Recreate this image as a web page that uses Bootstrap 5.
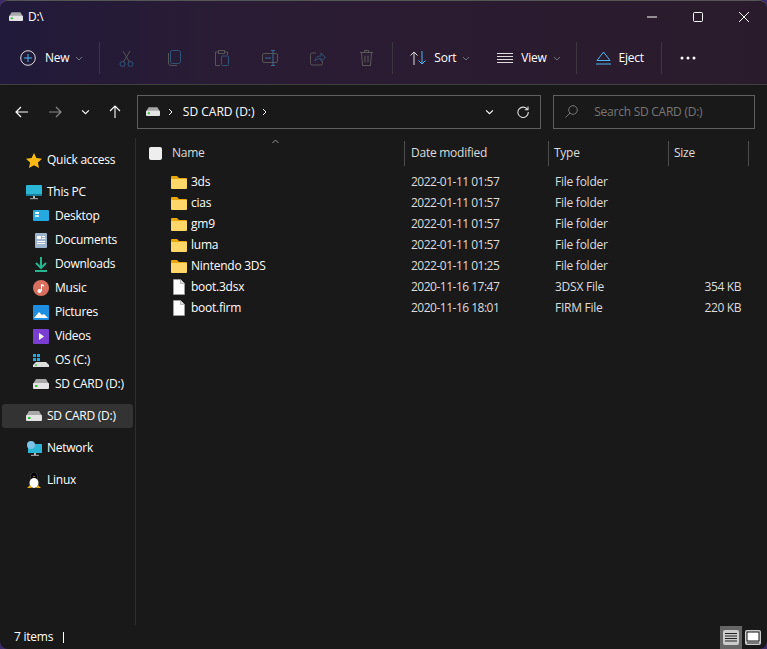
<!DOCTYPE html>
<html lang="en">
<head>
<meta charset="UTF-8">
<title>D:\</title>
<link href="https://cdn.jsdelivr.net/npm/bootstrap@5.3.0/dist/css/bootstrap.min.css" rel="stylesheet">
<style>
html, body { height: 100%; margin: 0; background: #3a2a6a; overflow: hidden; }
body { font-family: "Open Sans", "Noto Sans", sans-serif; font-size: 12px; color: #fff; letter-spacing: -.25px; }
.win { width: 767px; height: 649px; background: #191919; border-radius: 8px; overflow: hidden; border-top: 1px solid #555; }
.head-grad { background: linear-gradient(90deg, #211a3a 0%, #2a1c34 30%, #2a1b2c 100%); border-bottom: 1px solid #3f3f3f; height: 84px; }
.title-row { height: 31px; padding-left: 9px; }
.title-txt { margin-left: 5px; font-size: 12px; }
.win-ctl { width: 46px; height: 30px; }
.tool-row { height: 52px; padding-left: 20px; }
.tool-row svg { flex: none; }
.tool-lbl { font-size: 12px; font-weight: 500; }
.caret-sm { margin-left: 6px; }
.tool-sep { width: 1px; height: 32px; background: #3d3540; flex: none; }
.sep-new { margin-left: 16px; }
.sep-del { margin-left: 2px; }
.sep-view { margin-left: 15px; }
.sep-eject { margin-left: 17px; }
.ico-off { width: 48px; }
.ico-first { margin-left: 2px; }
.lbl-new { margin-left: 9px; }
.ico-sort { margin-left: 17px; }
.lbl-sort { margin-left: 7px; }
.ico-view { margin-left: 27px; }
.ico-eject { margin-left: 19px; }
.ico-more { margin-left: 18px; }
.addr-row { height: 53px; padding-right: 12px; }
.nav-ico { width: 35px; }
.nav-back { padding-left: 8px; }
.nav-fwd { padding-left: 7px; }
.nav-box { width: 30px; }
.nav-drop { padding-left: 2px; }
.addr-box { width: 405px; height: 34px; border: 1px solid #5f5f5f; margin-left: 7px; padding-left: 8px; }
.addr-txt { margin: 0 7px 0 10px; letter-spacing: 0; }
.addr-refresh { margin: 0 11px 0 23px; }
.search-box { width: 202px; height: 34px; border: 1px solid #5f5f5f; margin-left: 12px; color: #777; padding-left: 11px; }
.search-txt { margin-left: 16px; }
.main-area { height: 487px; }
.side-pane { width: 136px; padding-top: 10px; border-right: 1px solid #2e2e2e; flex: none; }
.side-row { height: 24px; padding-left: 26px; }
.side-row svg { margin-right: 5px; flex: none; }
.side-sub { padding-left: 33px; }
.side-sub svg { margin-right: 6px; }
.side-gap { margin-top: 8px; }
.side-sel { background: #333; border-radius: 3px; margin: 8px 2px 0 2px; padding-left: 24px; }
.list-pane { flex: 1; position: relative; }
.sort-mark { position: absolute; left: 135px; top: 1px; }
.head-row { height: 33px; padding-bottom: 3px; }
.head-chk { width: 13px; height: 13px; background: #eee; border-radius: 2px; margin-left: 13px; margin-right: 10px; flex: none; }
.col-dt { width: 144px; flex: none; }
.col-tp { width: 120px; flex: none; }
.col-sz { width: 80px; flex: none; }
.head-cell { height: 25px; border-left: 1px solid #4d4d4d; padding-left: 5px; display: flex; align-items: center; color: #ddd; }
.head-cell.col-dt { padding-left: 6px; }
.head-name { width: 232px; flex: none; color: #ddd; }
.head-end { width: 1px; height: 25px; background: #4d4d4d; }
.file-row { height: 21px; padding-left: 35px; }
.file-row svg { flex: none; margin-right: 4px; }
.file-nm { width: 234px; flex: none; display: flex; align-items: center; }
.cell-dt { width: 144px; flex: none; padding-left: 6px; color: #ddd; letter-spacing: -.5px; }
.cell-tp { width: 120px; flex: none; padding-left: 6px; color: #ddd; }
.cell-sz { width: 72px; flex: none; text-align: right; color: #ddd; letter-spacing: -.4px; }
.status-row { height: 24px; padding-left: 14px; }
.caret-bar { width: 1px; height: 11px; background: #fff; margin-left: 10px; }
.view-on { width: 22px; height: 23px; background: #666; display: flex; align-items: center; justify-content: center; }
.view-off { width: 22px; height: 23px; display: flex; align-items: center; justify-content: center; margin-right: 3px; }
</style>
</head>
<body>
<svg width="0" height="0" class="position-absolute">
  <defs>
    <symbol id="drive" viewBox="0 0 16 10">
      <path d="M3 0h10l3 5H0z" fill="#a8a8a8"/>
      <rect x="0" y="4" width="16" height="6" rx="1" fill="#e4e4e4"/>
      <rect x="2" y="6" width="2.500" height="2" fill="#2fbf3f"/>
    </symbol>
    <symbol id="folder" viewBox="0 0 16 14">
      <path d="M0 2a1 1 0 0 1 1-1h5l2 2h7a1 1 0 0 1 1 1v2H0z" fill="#e8a80c"/>
      <path d="M0 4h16v9a1 1 0 0 1-1 1H1a1 1 0 0 1-1-1z" fill="#ffd768"/>
    </symbol>
    <symbol id="file" viewBox="0 0 12 16">
      <path d="M.5.5h7l4 4v11H.5z" fill="#fff" stroke="#aaa" stroke-width=".6"/>
      <path d="M7.500.5v4h4" fill="#ddd" stroke="#999" stroke-width=".6"/>
    </symbol>
    <symbol id="chev" viewBox="0 0 8 5">
      <path d="M1 1l3 3 3-3" fill="none" stroke="currentColor" stroke-width="1"/>
    </symbol>
    <symbol id="monitor" viewBox="0 0 16 15">
      <rect x="0" y="0" width="16" height="11" rx="1" fill="#2bb6d6"/>
      <path d="M0 9h16v2H0z" fill="#1b7f9a"/>
      <rect x="7" y="11" width="2" height="2" fill="#bbb"/>
      <rect x="4" y="13" width="8" height="1.200" fill="#999"/>
    </symbol>
  </defs>
</svg>

<div class="win d-flex flex-column">
  <div class="head-grad flex-none">
    <div class="title-row d-flex align-items-center">
      <svg width="14" height="9"><use href="#drive"/></svg>
      <span class="title-txt">D:\</span>
      <div class="ms-auto d-flex">
        <div class="win-ctl d-flex align-items-center justify-content-center"><svg width="10" height="10"><path d="M0 5h10" stroke="#fff"/></svg></div>
        <div class="win-ctl d-flex align-items-center justify-content-center"><svg width="10" height="10"><rect x=".5" y=".5" width="9" height="9" rx="1" fill="none" stroke="#fff"/></svg></div>
        <div class="win-ctl d-flex align-items-center justify-content-center"><svg width="10" height="10"><path d="M0 0l10 10M10 0L0 10" stroke="#fff"/></svg></div>
      </div>
    </div>
    <div class="tool-row d-flex align-items-center">
      <svg width="16" height="16" viewBox="0 0 16 16"><circle cx="8" cy="8" r="7.300" fill="none" stroke="#ddd"/><path d="M8 4v8M4 8h8" stroke="#4db5f0"/></svg>
      <span class="tool-lbl lbl-new">New</span>
      <svg class="caret-sm text-secondary" width="8" height="5"><use href="#chev"/></svg>
      <span class="tool-sep sep-new"></span>
      <div class="ico-off ico-first d-flex justify-content-center"><svg width="15" height="17" viewBox="0 0 15 17" fill="none" stroke="#2f5478"><circle cx="3.500" cy="14" r="2.500"/><circle cx="11.500" cy="14" r="2.500"/><path d="M4.500 12L11 1M10.500 12L4 1" stroke="#555"/></svg></div>
      <div class="ico-off d-flex justify-content-center"><svg width="13" height="16" viewBox="0 0 13 16" fill="none"><rect x="2.500" y=".5" width="10" height="13" rx="2" stroke="#2f5478"/><path d="M.5 3v10a2.500 2.500 0 0 0 2.500 2.500h6" stroke="#555"/></svg></div>
      <div class="ico-off d-flex justify-content-center"><svg width="14" height="16" viewBox="0 0 14 16" fill="none"><path d="M3 2H.5v13.500H5M10 2h2.500v3" stroke="#555"/><rect x="3.500" y=".5" width="6" height="3" stroke="#555"/><rect x="6.500" y="6" width="7" height="9.500" rx="1" stroke="#2f5478"/></svg></div>
      <div class="ico-off d-flex justify-content-center"><svg width="16" height="16" viewBox="0 0 16 16" fill="none"><rect x=".5" y="3.500" width="15" height="9" rx="1.500" stroke="#555"/><path d="M3 8h6" stroke="#2f5478" stroke-width="1.500"/><path d="M11 .5v15M9 .5h4M9 15.500h4" stroke="#3a6a95"/></svg></div>
      <div class="ico-off d-flex justify-content-center"><svg width="16" height="15" viewBox="0 0 16 15" fill="none"><path d="M6 2H2a1.500 1.500 0 0 0-1.500 1.500v9A1.500 1.500 0 0 0 2 14h9a1.500 1.500 0 0 0 1.500-1.500V10" stroke="#555"/><path d="M5 10c0-4 3-5 6-5V2l4.500 4.500L11 10V7.500c-3 0-5 1-6 2.500z" stroke="#2f5478"/></svg></div>
      <div class="ico-off d-flex justify-content-center"><svg width="13" height="16" viewBox="0 0 13 16" fill="none" stroke="#5a5a5a"><path d="M0 2.500h13M4.500 2.500V.5h4v2M1.500 2.500l1 13h8l1-13M5 5.500v7M8 5.500v7"/></svg></div>
      <span class="tool-sep sep-del"></span>
      <svg class="ico-sort" width="17" height="14" viewBox="0 0 17 14" fill="none"><path d="M4 14V1M.5 4.500L4 1l3.500 3.500" stroke="#ddd"/><path d="M12 0v13M8.500 9.500L12 13l3.500-3.500" stroke="#4db5f0"/></svg>
      <span class="tool-lbl lbl-sort">Sort</span>
      <svg class="caret-sm text-secondary" width="8" height="5"><use href="#chev"/></svg>
      <svg class="ico-view" width="16" height="11" viewBox="0 0 16 11" fill="none" stroke="#ddd"><path d="M0 .5h16M0 3.500h16M0 6.500h16M0 9.500h16"/></svg>
      <span class="tool-lbl ms-2">View</span>
      <svg class="caret-sm text-secondary" width="8" height="5"><use href="#chev"/></svg>
      <span class="tool-sep sep-view"></span>
      <svg class="ico-eject" width="15" height="14" viewBox="0 0 15 14" fill="none" stroke="#4db5f0"><path d="M7.500 1L14 9.500H1zM0 13h15"/></svg>
      <span class="tool-lbl ms-2">Eject</span>
      <span class="tool-sep sep-eject"></span>
      <svg class="ico-more" width="16" height="4"><circle cx="2" cy="2" r="1.500" fill="#fff"/><circle cx="8" cy="2" r="1.500" fill="#fff"/><circle cx="14" cy="2" r="1.500" fill="#fff"/></svg>
    </div>
  </div>

  <div class="addr-row d-flex align-items-center flex-none">
    <div class="nav-ico nav-back d-flex justify-content-center"><svg width="13" height="12" viewBox="0 0 13 12" fill="none" stroke="#fff" stroke-width="1.200"><path d="M13 6H1M6 1L1 6l5 5"/></svg></div>
    <div class="nav-ico nav-fwd d-flex justify-content-center"><svg width="13" height="12" viewBox="0 0 13 12" fill="none" stroke="#888" stroke-width="1.200"><path d="M0 6h12M7 1l5 5-5 5"/></svg></div>
    <div class="nav-box nav-drop d-flex justify-content-center text-white"><svg width="9" height="6" viewBox="0 0 8 5"><use href="#chev"/></svg></div>
    <div class="nav-box d-flex justify-content-center"><svg width="12" height="13" viewBox="0 0 12 13" fill="none" stroke="#fff" stroke-width="1.100"><path d="M6 13V1M1 6l5-5 5 5"/></svg></div>
    <div class="addr-box d-flex align-items-center">
      <svg width="14" height="9"><use href="#drive"/></svg>
      <svg class="ms-2" width="5" height="8" viewBox="0 0 5 8" fill="none" stroke="#fff"><path d="M1 1l3 3-3 3"/></svg>
      <span class="addr-txt">SD CARD (D:)</span>
      <svg width="5" height="8" viewBox="0 0 5 8" fill="none" stroke="#fff"><path d="M1 1l3 3-3 3"/></svg>
      <svg class="ms-auto text-white" width="9" height="6" viewBox="0 0 8 5"><use href="#chev"/></svg>
      <svg class="addr-refresh" width="12" height="12" viewBox="0 0 12 12" fill="none" stroke="#ddd" stroke-width="1.100"><path d="M10.500 3.500A5.200 5.200 0 1 0 11.300 6M11 .5v3.200H7.800"/></svg>
    </div>
    <div class="search-box d-flex align-items-center">
      <svg width="13" height="13" viewBox="0 0 13 13" fill="none" stroke="#777"><circle cx="8" cy="5" r="4.300"/><path d="M5 8L.5 12.500"/></svg>
      <span class="search-txt">Search SD CARD (D:)</span>
    </div>
  </div>

  <div class="main-area d-flex">
    <div class="side-pane">
      <div class="side-row d-flex align-items-center"><svg width="16" height="15" viewBox="0 0 16 15"><path d="M8 0l2.400 5 5.600.7-4.100 3.800 1.100 5.500L8 12.300 3 15l1.100-5.500L0 5.700 5.600 5z" fill="#fdb913"/></svg>Quick access</div>
      <div class="side-row side-gap d-flex align-items-center"><svg width="16" height="15"><use href="#monitor"/></svg>This PC</div>
      <div class="side-row side-sub d-flex align-items-center"><svg width="16" height="12" viewBox="0 0 16 12"><rect width="16" height="11" rx="1" fill="#26a8e0"/><rect x="2" y="2" width="4" height="2" fill="#fff"/><rect x="2" y="5" width="4" height="2" fill="#cef"/></svg>Desktop</div>
      <div class="side-row side-sub d-flex align-items-center"><svg width="16" height="15" viewBox="0 0 16 15"><rect x="2" width="12" height="15" rx="1" fill="#9db4cc"/><path d="M4 3h4v3H4zM9 3h3v1H9zM9 5h3v1H9zM4 8h8v1H4zM4 10h8v1H4z" fill="#fff"/></svg>Documents</div>
      <div class="side-row side-sub d-flex align-items-center"><svg width="16" height="15" viewBox="0 0 16 15" fill="none" stroke="#26b48f" stroke-width="2"><path d="M8 0v10M3 6l5 5 5-5M2 14h12"/></svg>Downloads</div>
      <div class="side-row side-sub d-flex align-items-center"><svg width="16" height="16" viewBox="0 0 16 16"><circle cx="8" cy="8" r="8" fill="#d9705f"/><circle cx="6.500" cy="11" r="2" fill="#fff"/><path d="M8 11V4l3 1v1.500L9 6v5z" fill="#fff"/></svg>Music</div>
      <div class="side-row side-sub d-flex align-items-center"><svg width="16" height="15" viewBox="0 0 16 15"><rect width="16" height="15" rx="1" fill="#1e8fe0"/><path d="M1 13l5-6 3 3 2-1 4 4z" fill="#fff"/></svg>Pictures</div>
      <div class="side-row side-sub d-flex align-items-center"><svg width="16" height="15" viewBox="0 0 16 15"><rect width="16" height="15" rx="1" fill="#7a3fd0"/><path d="M6 4l5 3.500L6 11z" fill="#fff"/></svg>Videos</div>
      <div class="side-row side-sub d-flex align-items-center"><svg width="16" height="13" viewBox="0 0 16 13"><path d="M0 0h3v3H0zM4 0h3v3H4zM0 4h3v3H0zM4 4h3v3H4z" fill="#26a8e0"/><path d="M3 8h10l3 3v2H0v-2z" fill="#ddd"/><rect x="2" y="10.500" width="2" height="1.200" fill="#3c3"/></svg>OS (C:)</div>
      <div class="side-row side-sub d-flex align-items-center"><svg width="16" height="10"><use href="#drive"/></svg>SD CARD (D:)</div>
      <div class="side-row side-sel d-flex align-items-center"><svg width="16" height="10"><use href="#drive"/></svg>SD CARD (D:)</div>
      <div class="side-row side-gap d-flex align-items-center"><svg width="16" height="15" viewBox="0 0 16 15"><rect x="2" y="3" width="14" height="9" fill="#2bb6d6"/><circle cx="5" cy="4" r="4" fill="#7cc3e8"/><rect x="8" y="12" width="2" height="2" fill="#bbb"/><rect x="5" y="13.800" width="8" height="1.200" fill="#999"/></svg>Network</div>
      <div class="side-row side-gap d-flex align-items-center"><svg width="16" height="17" viewBox="0 0 16 17"><ellipse cx="8" cy="5" rx="3.500" ry="5" fill="#000" stroke="#555" stroke-width=".5"/><ellipse cx="8" cy="11" rx="4.500" ry="5" fill="#fff"/><path d="M1 16l3-3 2 3zM15 16l-3-3-2 3z" fill="#e8a80c"/><path d="M7 4h2l-1 1.500z" fill="#e8a80c"/></svg>Linux</div>
    </div>

    <div class="list-pane">
      <svg class="sort-mark text-secondary" width="9" height="5" viewBox="0 0 8 5" fill="none" stroke="#999"><path d="M1 4l3-3 3 3"/></svg>
      <div class="head-row d-flex align-items-center">
        <span class="head-chk"></span>
        <span class="head-name">Name</span>
        <span class="head-cell col-dt">Date modified</span>
        <span class="head-cell col-tp">Type</span>
        <span class="head-cell col-sz">Size</span>
        <span class="head-end"></span>
      </div>
      <div class="file-row d-flex align-items-center"><span class="file-nm"><svg width="16" height="14"><use href="#folder"/></svg>3ds</span><span class="cell-dt">2022-01-11 01:57</span><span class="cell-tp">File folder</span><span class="cell-sz"></span></div>
      <div class="file-row d-flex align-items-center"><span class="file-nm"><svg width="16" height="14"><use href="#folder"/></svg>cias</span><span class="cell-dt">2022-01-11 01:57</span><span class="cell-tp">File folder</span><span class="cell-sz"></span></div>
      <div class="file-row d-flex align-items-center"><span class="file-nm"><svg width="16" height="14"><use href="#folder"/></svg>gm9</span><span class="cell-dt">2022-01-11 01:57</span><span class="cell-tp">File folder</span><span class="cell-sz"></span></div>
      <div class="file-row d-flex align-items-center"><span class="file-nm"><svg width="16" height="14"><use href="#folder"/></svg>luma</span><span class="cell-dt">2022-01-11 01:57</span><span class="cell-tp">File folder</span><span class="cell-sz"></span></div>
      <div class="file-row d-flex align-items-center"><span class="file-nm"><svg width="16" height="14"><use href="#folder"/></svg>Nintendo 3DS</span><span class="cell-dt">2022-01-11 01:25</span><span class="cell-tp">File folder</span><span class="cell-sz"></span></div>
      <div class="file-row d-flex align-items-center"><span class="file-nm"><svg width="16" height="16"><use href="#file"/></svg>boot.3dsx</span><span class="cell-dt">2020-11-16 17:47</span><span class="cell-tp">3DSX File</span><span class="cell-sz">354 KB</span></div>
      <div class="file-row d-flex align-items-center"><span class="file-nm"><svg width="16" height="16"><use href="#file"/></svg>boot.firm</span><span class="cell-dt">2020-11-16 18:01</span><span class="cell-tp">FIRM File</span><span class="cell-sz">220 KB</span></div>
    </div>
  </div>

  <div class="status-row d-flex align-items-center">
    <span>7 items</span><span class="caret-bar"></span>
    <div class="ms-auto d-flex align-items-center">
      <span class="view-on"><svg width="16" height="15" viewBox="0 0 16 15"><rect width="16" height="15" rx="2" fill="#ccc"/><path d="M2 3.500h12M2 6h12M2 8.500h12M2 11h12" stroke="#222"/></svg></span>
      <span class="view-off"><svg width="16" height="15" viewBox="0 0 16 15"><rect width="16" height="15" rx="2" fill="#ccc"/><rect x="2" y="2" width="12" height="9" fill="#fff" stroke="#111"/><path d="M2 13h12" stroke="#222"/></svg></span>
    </div>
  </div>
</div>
<script src="https://cdn.jsdelivr.net/npm/bootstrap@5.3.0/dist/js/bootstrap.bundle.min.js"></script>
</body>
</html>
